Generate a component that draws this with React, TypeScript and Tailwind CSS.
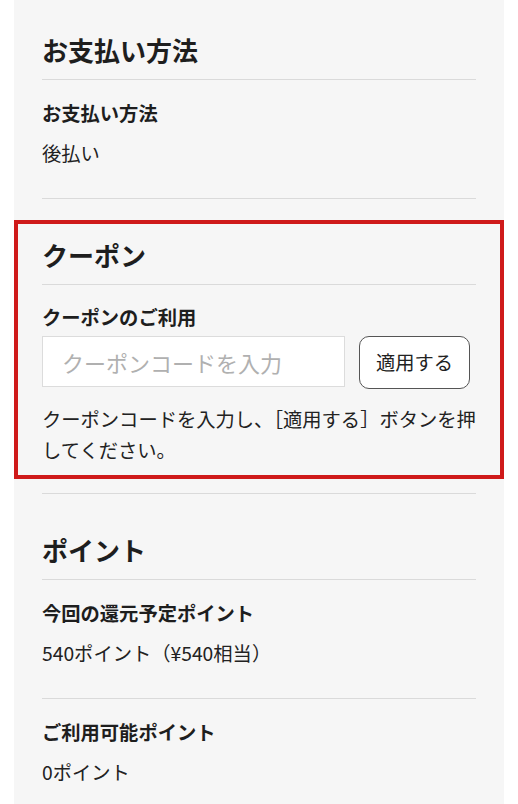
const font = { fontFamily: '"Noto Sans CJK JP", "Noto Sans", sans-serif' }

const SectionTitle = ({ children, className = '' }: { children: React.ReactNode; className?: string }) => (
  <h2 className={`pb-[11px] border-b border-[#dadada] text-[26px] leading-[36px] font-bold text-[#1e1e1e] ${className}`}>
    {children}
  </h2>
)

const Item = ({ label, value, last = false }: { label: string; value: string; last?: boolean }) => (
  <div className={`pt-[19px] pb-[31px] ${last ? '' : 'border-b border-[#dadada]'}`}>
    <p className="text-[19.3px] leading-[28px] font-bold text-[#1e1e1e]">{label}</p>
    <p className="mt-[12px] text-[19.3px] leading-[28px] text-[#222]">{value}</p>
  </div>
)

export default function App() {
  return (
    <div className="min-h-[804px] bg-white px-[14px]" style={font}>
      <div className="min-h-[804px] bg-[#f6f6f6] px-[28px]">
        <section className="pt-8">
          <SectionTitle>お支払い方法</SectionTitle>
          <Item label="お支払い方法" value="後払い" />
        </section>

        <section className="-mx-[28px] mt-[21px] border-4 border-[#cf1a1a] px-[24px] pt-[13px] pb-[9px]">
          <SectionTitle>クーポン</SectionTitle>
          <div className="pt-[18px]">
            <label htmlFor="coupon" className="block text-[19.3px] leading-[28px] font-bold text-[#1e1e1e]">
              クーポンのご利用
            </label>
            <div className="mt-[5px] flex items-start gap-[14px]">
              <input
                id="coupon"
                placeholder="クーポンコードを入力"
                className="w-[303px] h-[51px] bg-white border border-[#dcdcdc] px-[19px] text-[22px] text-[#222] placeholder:text-[#b0b0b0] outline-none"
              />
              <button className="w-[111px] h-[53px] rounded-[10px] border border-[#555] bg-white text-[19.3px] text-[#222]">
                適用する
              </button>
            </div>
            <p className="mt-[15px] -mr-[4px] text-[19.3px] leading-[31px] text-[#222]">
              クーポンコードを入力し、［適用する］ボタンを押してください。
            </p>
          </div>
        </section>

        <section className="mt-[14px] border-t border-[#dadada] pt-[38px]">
          <SectionTitle>ポイント</SectionTitle>
          <Item label="今回の還元予定ポイント" value="540ポイント（¥540相当）" />
          <Item label="ご利用可能ポイント" value="0ポイント" last />
        </section>
      </div>
    </div>
  )
}
